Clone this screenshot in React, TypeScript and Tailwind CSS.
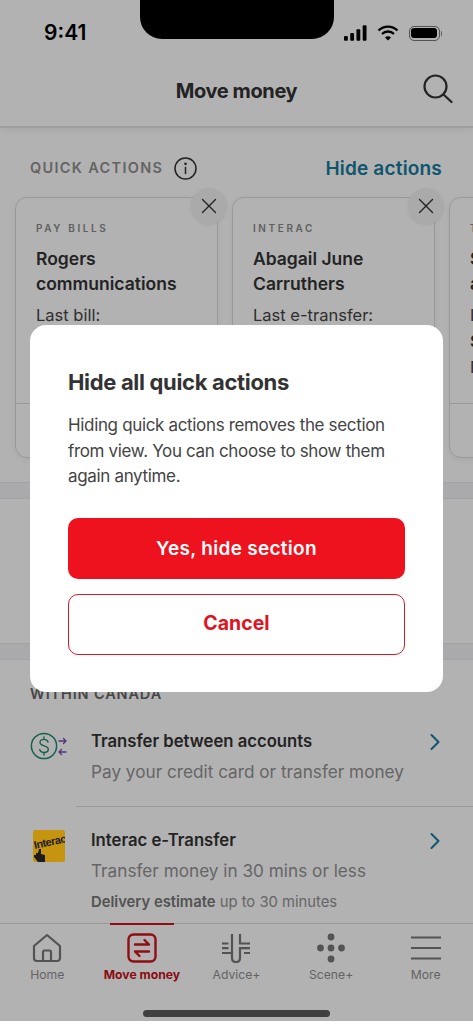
import React from "react";

const Cross = () => (
  <svg width="16" height="16" viewBox="0 0 16 16" fill="none" stroke="#333" strokeWidth="1.4" strokeLinecap="round">
    <path d="M1.5 1.5 14.5 14.5M14.5 1.5 1.5 14.5" />
  </svg>
);

function Card({ kicker, title, line, extra }: { kicker: string; title: string[]; line: string; extra?: string[] }) {
  return (
    <div className="relative w-[203px] h-[261px] shrink-0 rounded-xl border border-[#dcdcdc] bg-white shadow-[0_2px_6px_rgba(0,0,0,0.06)] flex flex-col">
      <div className="flex-1 pl-[20px] pt-[24px]">
        <div className="text-[10px] leading-[13px] font-semibold tracking-[0.26em] text-[#8a8a8a]">{kicker}</div>
        <div className="mt-[11px] text-[17.5px] leading-[25px] font-semibold text-[#333]">
          {title.map((t) => (
            <div key={t} className="whitespace-nowrap">{t}</div>
          ))}
        </div>
        <div className="mt-[7px] text-[16.5px] leading-[25px] text-[#444] whitespace-nowrap">{line}</div>
        {extra?.map((t, i) => (
          <div key={t} className={`text-[16.5px] leading-[26px] whitespace-nowrap ${i === 0 ? "font-semibold text-[#333]" : "text-[#444]"}`}>{t}</div>
        ))}
      </div>
      <div className="h-[54px] border-t border-[#dcdcdc]" />
      <div className="absolute top-[-10px] right-[-10px] w-[36px] h-[36px] rounded-full bg-[#f4f4f4] shadow-[0_1px_3px_rgba(0,0,0,0.08)] flex items-center justify-center">
        <Cross />
      </div>
    </div>
  );
}

const Chevron = () => (
  <svg width="12" height="18" viewBox="0 0 12 18" fill="none" stroke="#157a9c" strokeWidth="2" strokeLinecap="round" strokeLinejoin="round">
    <path d="M2.5 2 9.5 9 2.5 16" />
  </svg>
);

const TransferIcon = () => (
  <svg width="40" height="30" viewBox="0 0 40 30" fill="none">
    <circle cx="14" cy="15" r="12.6" stroke="#1f8a6c" strokeWidth="1.5" />
    <path d="M18 11c-.6-1.8-2.2-2.6-4-2.6-2.2 0-4 1.1-4 3.1 0 4.300 8.300 2.400 8.300 6.800 0 2.100-2 3.200-4.300 3.200-2 0-3.800-1-4.300-2.900M14 6v2.400M14 21.500V24" stroke="#1f8a6c" strokeWidth="1.4" strokeLinecap="round" />
    <path d="M29 10h7M33.500 7.500l2.500 2.500-2.500 2.500" stroke="#7b4fb0" strokeWidth="1.4" strokeLinecap="round" strokeLinejoin="round" />
    <path d="M36 21h-7M31.500 18.500 29 21l2.500 2.500" stroke="#7b4fb0" strokeWidth="1.4" strokeLinecap="round" strokeLinejoin="round" />
  </svg>
);

const InteracLogo = () => (
  <div className="relative z-10 w-[32px] h-[32px] rounded-[2px] bg-[#c6950f] overflow-hidden">
    <span className="absolute left-[1px] top-[9px] text-[11px] leading-[12px] font-bold text-[#1c1c1c] [font-family:'Liberation_Sans_Narrow','Liberation_Sans',sans-serif] tracking-[-0.05em] -rotate-12 origin-left whitespace-nowrap">Interac</span>
    <svg className="absolute left-[1px] top-[19px]" width="12" height="13" viewBox="0 0 12 13" fill="#1c1c1c">
      <path d="M5 0h2v5l4 1v7H4L0 8V6h2V4h2z" />
    </svg>
  </div>
);

const HomeIcon = () => (
  <svg width="30" height="30" viewBox="0 0 30 30" fill="none" stroke="#777" strokeWidth="2.2" strokeLinejoin="round">
    <path d="M2 13 15 2l13 11v12a3 3 0 0 1-3 3H5a3 3 0 0 1-3-3z" />
    <path d="M11 28v-9a1.500 1.500 0 0 1 1.500-1.500h5A1.500 1.500 0 0 1 19 19v9" />
  </svg>
);

const MoveIcon = () => (
  <svg width="30" height="30" viewBox="0 0 30 30" fill="none" stroke="#d0121c" strokeWidth="2.4" strokeLinecap="round" strokeLinejoin="round">
    <rect x="1.500" y="1.500" width="27" height="27" rx="5" />
    <path d="M8 11.500h14M17.500 7l4.500 4.500M8 18.500h14M12.500 23 8 18.500" />
  </svg>
);

const AdviceIcon = () => (
  <svg width="30" height="30" viewBox="-1 -1 30 30" fill="none" stroke="#777" strokeWidth="2.2">
    <path d="M10 0V19H0M0 9.500H6.500M0 14.200H6.500" />
    <path d="M10 19V24Q10 28 14 28Q18 28 18 24V14.200H28M18 0V9.500H28M22 19H28" />
  </svg>
);

const SceneIcon = () => (
  <svg width="28" height="30" viewBox="0 0 28 30" fill="#777">
    <circle cx="14" cy="4" r="3.400" />
    <circle cx="14" cy="15" r="3.400" />
    <circle cx="14" cy="26" r="3.400" />
    <circle cx="3.500" cy="15" r="3.400" />
    <circle cx="24.500" cy="15" r="3.400" />
  </svg>
);

const MoreIcon = () => (
  <svg width="30" height="26" viewBox="0 0 30 26" fill="none" stroke="#777" strokeWidth="2.200">
    <path d="M0 2.500h30M0 13h30M0 23.500h30" />
  </svg>
);

function NavItem({ icon, label, active }: { icon: React.ReactNode; label: string; active?: boolean }) {
  return (
    <div className="relative flex flex-col items-center">
      {active && <div className="absolute top-[-1px] w-[64px] h-[2px] bg-[#d0121c]" />}
      <div className="h-[30px] mt-[9px] flex items-center justify-center">{icon}</div>
      <div className={`mt-[3px] text-[12.2px] leading-[18px] whitespace-nowrap ${active ? "font-bold text-[#c8101a]" : "text-[#8f8f8f]"}`}>{label}</div>
    </div>
  );
}

export default function App() {
  return (
    <div className="relative w-[473px] h-[1021px] overflow-hidden bg-white flex flex-col [font-family:Inter,'Liberation_Sans',sans-serif]">
      <div className="h-[60px] shrink-0 relative flex items-center justify-between pl-[44px] pr-[31px] pt-[5px]">
        <div className="text-[21px] font-semibold text-black leading-none">9:41</div>
        <div className="flex items-center gap-[10px] pt-[1px]">
          <svg width="23" height="16" viewBox="0 0 24 16" fill="black">
            <rect x="0" y="11" width="4" height="5" rx="1" />
            <rect x="6.500" y="8" width="4" height="8" rx="1" />
            <rect x="13" y="4" width="4" height="12" rx="1" />
            <rect x="19.500" y="0" width="4" height="16" rx="1" />
          </svg>
          <svg width="22" height="16" viewBox="0 0 22 16" fill="none" stroke="black" strokeWidth="2.300">
            <path d="M1.500 5.500a13.500 13.500 0 0 1 19 0M5 9a8.500 8.500 0 0 1 12 0" />
            <path d="M8 12.500a4 4 0 0 1 6 0L11 15.500z" fill="black" stroke="none" />
          </svg>
          <div className="flex items-center">
            <div className="w-[31px] h-[15px] rounded-[5px] border border-[#777] p-[1.500px]">
              <div className="w-full h-full rounded-[3px] bg-black" />
            </div>
            <div className="w-[1.500px] h-[5px] bg-[#888] rounded-r ml-[1px]" />
          </div>
        </div>
      </div>

      <div className="h-[68px] shrink-0 relative flex items-center justify-center border-b-2 border-[#e2e2e4] shadow-[0_3px_6px_rgba(0,0,0,0.05)]">
        <div className="text-[20px] font-bold tracking-[-0.02em] text-[#333] pb-[4px]">Move money</div>
        <svg className="absolute right-[20px] top-[14px]" width="30" height="30" viewBox="0 0 30 30" fill="none" stroke="#333" strokeWidth="2.200" strokeLinecap="round">
          <circle cx="12.500" cy="12.500" r="11" />
          <path d="M20.500 20.500 28.500 28" />
        </svg>
      </div>

      <div className="h-[354px] shrink-0 overflow-hidden">
        <div className="flex items-center justify-between pl-[30px] pr-[31px] pt-[12px] h-[68px]">
          <div className="flex items-center gap-[11px]">
            <span className="text-[14.500px] font-semibold tracking-[0.09em] text-[#909090]">QUICK ACTIONS</span>
            <svg width="23" height="23" viewBox="0 0 23 23" fill="none" stroke="#333" strokeWidth="1.500" strokeLinecap="round">
              <circle cx="11.500" cy="11.500" r="10.500" />
              <path d="M11.500 10.500v6" />
              <circle cx="11.500" cy="6.800" r="0.600" fill="#333" />
            </svg>
          </div>
          <span className="text-[19px] font-semibold tracking-[0.01em] text-[#157a9c] pt-[2px]">Hide actions</span>
        </div>
        <div className="flex gap-[14px] pl-[15px] mt-[1px]">
          <Card kicker="PAY BILLS" title={["Rogers", "communications"]} line="Last bill:" />
          <Card kicker="INTERAC" title={["Abagail June", "Carruthers"]} line="Last e-transfer:" />
          <Card kicker="TRANSFER" title={["Savings", "account"]} line="Last" extra={["Sent", "Nov"]} />
        </div>
      </div>

      <div className="h-[17px] shrink-0 bg-[#f4f4f6] border-y border-[#eaeaec]" />
      <div className="h-[144px] shrink-0" />
      <div className="h-[17px] shrink-0 bg-[#f4f4f6] border-y border-[#eaeaec]" />

      <div className="flex-1 relative">
        <div className="pl-[30px] pt-[25px] text-[14.500px] leading-[18px] font-semibold tracking-[0.06em] text-[#666]">WITHIN CANADA</div>

        <div className="flex items-start pl-[30px] pr-[32px] pt-[26px]">
          <div className="w-[45px] shrink-0 pt-[2px]"><TransferIcon /></div>
          <div className="ml-[16px] flex-1">
            <div className="text-[16.700px] leading-[24px] font-semibold text-[#333]">Transfer between accounts</div>
            <div className="mt-[7px] text-[17.200px] leading-[24px] text-[#929292]">Pay your credit card or transfer money</div>
          </div>
          <div className="pt-[4px]"><Chevron /></div>
        </div>

        <div className="ml-[76px] mt-[22px] border-t border-[#dcdcdc]" />

        <div className="flex items-start pl-[33px] pr-[32px] pt-[21px]">
          <div className="w-[32px] shrink-0 pt-[2px]"><InteracLogo /></div>
          <div className="ml-[26px] flex-1">
            <div className="text-[16.700px] leading-[24px] font-semibold text-[#333]">Interac e-Transfer</div>
            <div className="mt-[7px] text-[17.200px] leading-[24px] text-[#929292]">Transfer money in 30 mins or less</div>
            <div className="mt-[9px] text-[14.800px] leading-[20px] text-[#929292]"><span className="font-semibold text-[#777]">Delivery estimate</span> up to 30 minutes</div>
          </div>
          <div className="pt-[4px]"><Chevron /></div>
        </div>
      </div>

      <div className="h-[98px] shrink-0 relative border-t border-[#dcdcdc] bg-white">
        <div className="grid grid-cols-5">
          <NavItem icon={<HomeIcon />} label="Home" />
          <NavItem icon={<MoveIcon />} label="Move money" active />
          <NavItem icon={<AdviceIcon />} label="Advice+" />
          <NavItem icon={<SceneIcon />} label="Scene+" />
          <NavItem icon={<MoreIcon />} label="More" />
        </div>
        <div className="absolute left-[143px] bottom-[4px] w-[187px] h-[7px] rounded-full bg-[#5c5c5c]" />
      </div>

      <div className="absolute inset-0 bg-black/30" />

      <div className="absolute top-0 left-[140px] w-[194px] h-[39px] bg-black rounded-b-[22px]" />

      <div className="absolute z-20 left-[30px] top-[325px] w-[413px] h-[367px] rounded-2xl bg-white px-[38px] pt-[42px] flex flex-col">
        <div className="text-[22px] leading-[30px] font-bold tracking-[-0.015em] text-[#333]">Hide all quick actions</div>
        <div className="mt-[16px] text-[17px] leading-[25.500px] tracking-[-0.02em] text-[#444]">
          Hiding quick actions removes the section from view. You can choose to show them again anytime.
        </div>
        <button className="mt-[28px] h-[61px] pt-[3px] rounded-[10px] bg-[#ee121e] text-white text-[19px] font-semibold tracking-[0.015em]">Yes, hide section</button>
        <button className="mt-[15px] h-[61px] rounded-[10px] border border-[#d81a26] bg-white text-[#e0131f] text-[19.500px] font-bold">Cancel</button>
      </div>
    </div>
  );
}
